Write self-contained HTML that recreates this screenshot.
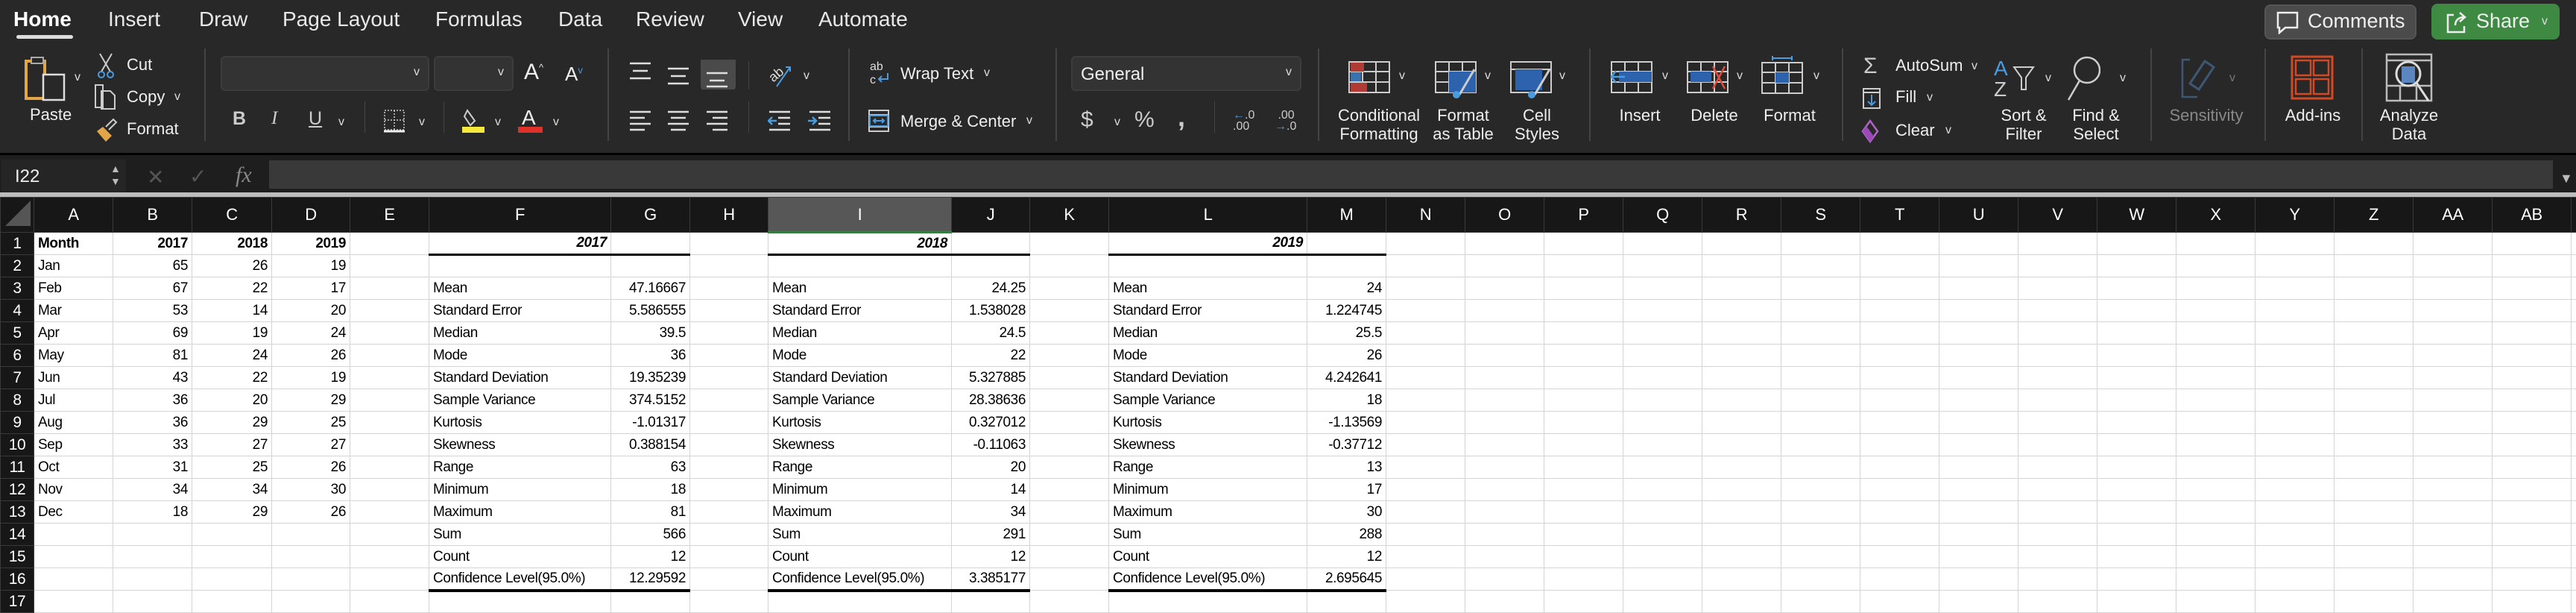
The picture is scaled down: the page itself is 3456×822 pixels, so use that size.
<!DOCTYPE html>
<html><head><meta charset="utf-8">
<style>
*{margin:0;padding:0;box-sizing:border-box}
body{width:3456px;height:819px;background:#fff;overflow:hidden;font-family:"Liberation Sans",sans-serif;position:relative}
#top{position:absolute;left:0;top:0;width:3456px;height:205px;background:#282828;color:#f2f2f2}
.tab{position:absolute;top:10px;font-size:28px;color:#e8e8e8}
.t{position:absolute;font-size:22px;color:#eee;white-space:nowrap}
.c{text-align:center;line-height:25px}
.sep{position:absolute;top:65px;width:2px;height:124px;background:#444}
.dd{position:absolute;background:#333;border:2px solid #3c3c3c;border-radius:6px}
.chev{position:absolute;font-size:16px;color:#ddd}
svg{position:absolute}
#fb{position:absolute;left:0;top:205px;width:3456px;height:59px;background:#1e1e1e;border-top:3px solid #000}
#grid{position:absolute;left:0;top:258px;width:3456px;height:6px;background:#bdbdbd}
table{position:absolute;left:0;top:264px;width:3456px;border-collapse:collapse;table-layout:fixed;font-size:19px;letter-spacing:-0.4px}
th{background:#171717;color:#fff;font-weight:normal;border:1px solid #3a3a3a;font-size:22px}
thead th{height:43px}
tbody th{text-align:center;font-size:21px}
td{height:30px;border:1px solid #d4d4d4;padding:0 5px;white-space:nowrap;overflow:hidden;color:#000}
.r{text-align:right}.b{font-weight:bold}.bi{font-weight:bold;font-style:italic;text-align:right}
.u{border-bottom:3px solid #000}.uu{border-bottom:4px solid #000}
</style></head><body>
<div id="top">
<div class="tab" style="left:18px;font-weight:bold;color:#fff">Home</div>
<div style="position:absolute;left:22px;top:47px;width:76px;height:5px;border-radius:3px;background:#ddd"></div>
<div class="tab" style="left:145px">Insert</div>
<div class="tab" style="left:267px">Draw</div>
<div class="tab" style="left:379px">Page Layout</div>
<div class="tab" style="left:584px">Formulas</div>
<div class="tab" style="left:749px">Data</div>
<div class="tab" style="left:853px">Review</div>
<div class="tab" style="left:990px">View</div>
<div class="tab" style="left:1098px">Automate</div>

<div style="position:absolute;left:3038px;top:6px;width:204px;height:47px;background:#4b4b4b;border-radius:8px;border:2px solid #555"></div>
<svg style="left:3052px;top:14px" width="34" height="32" viewBox="0 0 34 32"><path d="M4 3h26v20H14l-8 7v-7H4z" fill="none" stroke="#eee" stroke-width="2.5"/></svg>
<div class="t" style="left:3096px;top:13px;font-size:27px">Comments</div>
<div style="position:absolute;left:3262px;top:5px;width:172px;height:48px;background:#3e8a43;border-radius:8px"></div>
<svg style="left:3280px;top:14px" width="32" height="32" viewBox="0 0 32 32"><path d="M12 6H4v23h22v-8M14 20c0-8 6-11 12-11M20 3l7 6-7 6" fill="none" stroke="#eee" stroke-width="2.5"/></svg>
<div class="t" style="left:3322px;top:13px;font-size:27px">Share</div>
<div class="chev" style="left:3410px;top:20px">v</div>

<svg style="left:32px;top:74px" width="62" height="62" viewBox="0 0 62 62"><path d="M3 8h25v50H3z" fill="none" stroke="#e2a548" stroke-width="4"/><path d="M10 3h16v8H10z" fill="#282828" stroke="#aaa" stroke-width="2"/><rect x="26" y="26" width="28" height="34" fill="#282828" stroke="#ddd" stroke-width="2.5"/></svg>
<div class="chev" style="left:100px;top:95px">v</div>
<div class="t" style="left:40px;top:141px">Paste</div>
<svg style="left:130px;top:70px" width="24" height="36" viewBox="0 0 24 36"><path d="M4 2l14 24M20 2L6 26" stroke="#ccc" stroke-width="2" fill="none"/><circle cx="6" cy="30" r="4" fill="none" stroke="#4a9ce0" stroke-width="2"/><circle cx="18" cy="30" r="4" fill="none" stroke="#4a9ce0" stroke-width="2"/></svg>
<div class="t" style="left:170px;top:74px">Cut</div>
<svg style="left:126px;top:112px" width="32" height="36" viewBox="0 0 32 36"><path d="M2 2h10v30H2zM10 10h12l6 6v18H10z" fill="#282828" stroke="#ccc" stroke-width="2"/></svg>
<div class="t" style="left:170px;top:117px">Copy</div><div class="chev" style="left:234px;top:121px">v</div>
<svg style="left:126px;top:158px" width="32" height="34" viewBox="0 0 32 34"><path d="M4 18l12 14 8-8-12-12z" fill="#e2a548"/><path d="M16 12l10-10 4 4-10 10" fill="none" stroke="#ccc" stroke-width="2"/></svg>
<div class="t" style="left:170px;top:160px">Format</div>
<div class="sep" style="left:274px"></div>

<div class="dd" style="left:296px;top:75px;width:280px;height:47px"></div><div class="chev" style="left:555px;top:88px">v</div>
<div class="dd" style="left:582px;top:75px;width:107px;height:47px"></div><div class="chev" style="left:668px;top:88px">v</div>
<div class="t" style="left:703px;top:80px;font-size:30px">A<sup style="font-size:13px">^</sup></div>
<div class="t" style="left:758px;top:84px;font-size:26px">A<sup style="font-size:13px;color:#4a9ce0">v</sup></div>
<div class="t" style="left:312px;top:145px;font-weight:bold;font-size:25px;color:#ccc">B</div>
<div class="t" style="left:364px;top:145px;font-style:italic;font-size:25px;color:#ccc;font-family:'Liberation Serif',serif">I</div>
<div class="t" style="left:414px;top:145px;font-size:25px;color:#ccc;text-decoration:underline">U</div>
<div class="chev" style="left:454px;top:155px">v</div>
<div style="position:absolute;left:489px;top:136px;width:1px;height:42px;background:#444"></div>
<svg style="left:514px;top:146px" width="30" height="32" viewBox="0 0 30 32"><path d="M2 2h26v26H2zM15 2v26M2 15h26" fill="none" stroke="#ccc" stroke-width="1.5" stroke-dasharray="2 2"/><path d="M1 30h28" stroke="#eee" stroke-width="3"/></svg>
<div class="chev" style="left:562px;top:155px">v</div>
<div style="position:absolute;left:595px;top:136px;width:1px;height:42px;background:#444"></div>
<svg style="left:619px;top:144px" width="32" height="36" viewBox="0 0 32 36"><path d="M8 4l10 14-6 6L4 12z" fill="none" stroke="#ccc" stroke-width="2"/><rect x="1" y="26" width="30" height="8" fill="#f5ea3c"/></svg>
<div class="chev" style="left:664px;top:155px">v</div>
<div class="t" style="left:700px;top:142px;font-size:28px">A</div>
<div style="position:absolute;left:695px;top:170px;width:33px;height:8px;background:#e03128"></div>
<div class="chev" style="left:742px;top:155px">v</div>
<div class="sep" style="left:815px"></div>

<svg style="left:842px;top:80px" width="150" height="40" viewBox="0 0 150 40"><g stroke="#ddd" stroke-width="2.5"><path d="M3 5h28M7 15h20M3 25h28M54 12h28M58 22h20M54 32h28"/></g><rect x="98" y="-5" width="47" height="47" rx="6" fill="#4a4a4a"/><g stroke="#ddd" stroke-width="2.5"><path d="M106 18h28M110 28h20M106 36h28"/></g></svg>
<div style="position:absolute;left:1004px;top:82px;width:1px;height:38px;background:#444"></div>
<svg style="left:1030px;top:82px" width="36" height="36" viewBox="0 0 36 36"><text x="2" y="22" font-size="18" fill="#ddd" transform="rotate(-40 14 18)" font-family="Liberation Sans">ab</text><path d="M12 34L30 8M24 8h6v6" stroke="#4a9ce0" stroke-width="2" fill="none"/></svg>
<div class="chev" style="left:1078px;top:93px">v</div>
<svg style="left:842px;top:148px" width="150" height="28" viewBox="0 0 150 28"><g stroke="#ddd" stroke-width="2.5"><path d="M3 2h28M3 10h20M3 18h28M3 26h20M54 2h28M58 10h20M54 18h28M58 26h20M106 2h28M114 10h20M106 18h28M114 26h20"/></g></svg>
<div style="position:absolute;left:1004px;top:136px;width:1px;height:42px;background:#444"></div>
<svg style="left:1030px;top:148px" width="90" height="28" viewBox="0 0 90 28"><g stroke="#ddd" stroke-width="2.5"><path d="M2 2h28M14 10h16M14 18h16M2 26h28M56 2h28M68 10h16M68 18h16M56 26h28"/></g><path d="M12 14H2M6 9l-5 5 5 5M54 14h10M60 9l5 5-5 5" stroke="#4a9ce0" stroke-width="2.5" fill="none"/></svg>
<div class="sep" style="left:1138px"></div>

<svg style="left:1165px;top:80px" width="32" height="36" viewBox="0 0 32 36"><text x="2" y="14" font-size="16" fill="#ddd" font-family="Liberation Sans">ab</text><text x="2" y="32" font-size="16" fill="#ddd" font-family="Liberation Sans">c</text><path d="M26 18v8H14M18 22l-4 4 4 4" stroke="#4a9ce0" stroke-width="2" fill="none"/></svg>
<div class="t" style="left:1208px;top:86px">Wrap Text</div><div class="chev" style="left:1320px;top:89px">v</div>
<svg style="left:1164px;top:146px" width="30" height="32" viewBox="0 0 30 32"><path d="M2 2h26v28H2zM2 8h26M2 24h26" fill="none" stroke="#ccc" stroke-width="2"/><path d="M3 9h24v14H3z" fill="none" stroke="#4a9ce0" stroke-width="2"/><path d="M8 16h14M11 13l-3 3 3 3M19 13l3 3-3 3" stroke="#4a9ce0" stroke-width="2" fill="none"/></svg>
<div class="t" style="left:1208px;top:150px">Merge &amp; Center</div><div class="chev" style="left:1377px;top:153px">v</div>
<div class="sep" style="left:1416px"></div>

<div class="dd" style="left:1437px;top:75px;width:309px;height:47px"></div>
<div class="t" style="left:1450px;top:86px;font-size:24px">General</div><div class="chev" style="left:1725px;top:88px">v</div>
<div class="t" style="left:1450px;top:144px;font-size:30px;color:#ccc">$</div><div class="chev" style="left:1495px;top:155px">v</div>
<div class="t" style="left:1522px;top:144px;font-size:30px;color:#ccc">%</div>
<div class="t" style="left:1580px;top:136px;font-size:36px;color:#ccc;font-weight:bold">,</div>
<div style="position:absolute;left:1629px;top:136px;width:1px;height:42px;background:#444"></div>
<div class="t" style="left:1654px;top:147px;font-size:16px;line-height:15px;color:#ccc"><span style="color:#4a9ce0">&larr;</span>.0<br>.00</div>
<div class="t" style="left:1710px;top:147px;font-size:16px;line-height:15px;color:#ccc">&nbsp;.00<br><span style="color:#4a9ce0">&rarr;</span>.0</div>
<div class="sep" style="left:1768px"></div>

<svg style="left:1808px;top:81px" width="60" height="45" viewBox="0 0 60 45"><path d="M2 2h54v41H2zM20 2v41M38 2v41M2 15h54M2 29h54" fill="none" stroke="#ccc" stroke-width="2"/><rect x="4" y="3" width="18" height="12" fill="#b03a35"/><rect x="4" y="16" width="14" height="12" fill="#3a72b0"/><rect x="4" y="30" width="22" height="12" fill="#b03a35"/></svg>
<div class="chev" style="left:1877px;top:93px">v</div>
<svg style="left:1924px;top:81px" width="60" height="52" viewBox="0 0 60 52"><path d="M2 2h54v41H2zM20 2v41M38 2v41M2 15h54M2 29h54" fill="none" stroke="#ccc" stroke-width="2"/><rect x="20" y="15" width="36" height="28" fill="#2d63ad"/><path d="M54 12L34 46" stroke="#ccc" stroke-width="3"/><circle cx="30" cy="46" r="5" fill="#4a9ce0"/></svg>
<div class="chev" style="left:1992px;top:93px">v</div>
<svg style="left:2025px;top:81px" width="60" height="52" viewBox="0 0 60 52"><path d="M2 2h54v41H2zM2 12h54" fill="none" stroke="#ccc" stroke-width="2"/><rect x="8" y="12" width="36" height="28" fill="#2d63ad"/><path d="M54 12L34 46" stroke="#ccc" stroke-width="3"/><circle cx="30" cy="46" r="5" fill="#4a9ce0"/></svg>
<div class="chev" style="left:2092px;top:93px">v</div>
<div class="t c" style="left:1790px;top:142px;width:120px">Conditional<br>Formatting</div>
<div class="t c" style="left:1913px;top:142px;width:100px">Format<br>as Table</div>
<div class="t c" style="left:2012px;top:142px;width:100px">Cell<br>Styles</div>
<div class="sep" style="left:2132px"></div>

<svg style="left:2160px;top:81px" width="62" height="45" viewBox="0 0 62 45"><path d="M2 2h54v41H2zM20 2v41M38 2v41M2 15h54M2 29h54" fill="none" stroke="#ccc" stroke-width="2"/><rect x="12" y="15" width="44" height="14" fill="#2d63ad"/><path d="M20 22H2M8 14l-6 8 6 8" stroke="#4a9ce0" stroke-width="2.5" fill="none"/></svg>
<div class="chev" style="left:2230px;top:93px">v</div>
<svg style="left:2262px;top:81px" width="62" height="45" viewBox="0 0 62 45"><path d="M2 2h54v41H2zM20 2v41M38 2v41M2 15h54M2 29h54" fill="none" stroke="#ccc" stroke-width="2"/><rect x="6" y="15" width="28" height="14" fill="#2d63ad"/><path d="M36 8l16 30M52 8L36 38" stroke="#e04a3a" stroke-width="2.5"/></svg>
<div class="chev" style="left:2330px;top:93px">v</div>
<svg style="left:2362px;top:72px" width="58" height="54" viewBox="0 0 58 54"><path d="M16 3v6M16 6h26M42 3v6" stroke="#4a9ce0" stroke-width="2"/><path d="M2 12h54v41H2zM20 12v41M38 12v41M2 25h54M2 39h54" fill="none" stroke="#ccc" stroke-width="2"/><rect x="20" y="25" width="18" height="14" fill="#2d63ad"/></svg>
<div class="chev" style="left:2433px;top:93px">v</div>
<div class="t c" style="left:2150px;top:142px;width:100px">Insert</div>
<div class="t c" style="left:2250px;top:142px;width:100px">Delete</div>
<div class="t c" style="left:2351px;top:142px;width:100px">Format</div>
<div class="sep" style="left:2471px"></div>

<div class="t" style="left:2500px;top:72px;font-size:30px;color:#ccc">&Sigma;</div>
<div class="t" style="left:2543px;top:75px">AutoSum</div><div class="chev" style="left:2645px;top:80px">v</div>
<svg style="left:2498px;top:117px" width="26" height="30" viewBox="0 0 26 30"><path d="M2 2h22v26H2zM2 7h22" fill="none" stroke="#ccc" stroke-width="2"/><path d="M13 10v14M8 19l5 5 5-5" stroke="#4a9ce0" stroke-width="2" fill="none"/></svg>
<div class="t" style="left:2543px;top:117px">Fill</div><div class="chev" style="left:2585px;top:122px">v</div>
<svg style="left:2496px;top:160px" width="26" height="32" viewBox="0 0 26 32"><path d="M13 2l10 14-10 14L3 16z" fill="none" stroke="#b063c8" stroke-width="2.5"/><path d="M3 16l10 14 5-7-10-14z" fill="#9a4ab5"/></svg>
<div class="t" style="left:2543px;top:162px">Clear</div><div class="chev" style="left:2610px;top:166px">v</div>
<div class="t" style="left:2675px;top:76px;font-size:28px;color:#4a9ce0">A</div>
<div class="t" style="left:2675px;top:104px;font-size:28px;color:#ccc">Z</div>
<svg style="left:2700px;top:88px" width="30" height="34" viewBox="0 0 30 34"><path d="M2 2h26L18 16v16h-6V16z" fill="none" stroke="#ccc" stroke-width="2"/></svg>
<div class="chev" style="left:2744px;top:96px">v</div>
<svg style="left:2772px;top:74px" width="46" height="62" viewBox="0 0 46 62"><circle cx="28" cy="20" r="17" fill="none" stroke="#ccc" stroke-width="2.5"/><path d="M18 34L3 60" stroke="#ccc" stroke-width="2.5"/></svg>
<div class="chev" style="left:2844px;top:96px">v</div>
<div class="t c" style="left:2665px;top:142px;width:100px">Sort &amp;<br>Filter</div>
<div class="t c" style="left:2762px;top:142px;width:100px">Find &amp;<br>Select</div>
<div class="sep" style="left:2885px"></div>
<svg style="left:2926px;top:72px" width="56" height="60" viewBox="0 0 56 60"><path d="M22 58H2V8h10" fill="none" stroke="#3d5875" stroke-width="2.5"/><path d="M12 40l20-30 12 8-20 30z" fill="none" stroke="#3d5875" stroke-width="3"/></svg>
<div class="chev" style="left:2991px;top:96px;color:#777">v</div>
<div class="t c" style="left:2905px;top:142px;width:110px;color:#888">Sensitivity</div>
<div class="sep" style="left:3038px"></div>
<svg style="left:3073px;top:74px" width="58" height="60" viewBox="0 0 58 60"><path d="M2 2h54v56H2z" fill="none" stroke="#d04a26" stroke-width="3"/><path d="M7 7h20v20H7zM31 7h20v20H31zM7 32h20v20H7zM31 32h20v20H31z" fill="none" stroke="#d04a26" stroke-width="2.5"/></svg>
<div class="t c" style="left:3053px;top:142px;width:100px">Add-ins</div>
<div class="sep" style="left:3168px"></div>
<svg style="left:3200px;top:71px" width="64" height="66" viewBox="0 0 64 66"><path d="M2 2h60v62H2zM2 10h60M2 44h60M20 44v20M42 44v20" fill="none" stroke="#bbb" stroke-width="2.5"/><rect x="22" y="18" width="18" height="22" fill="#5b86bf"/><circle cx="31" cy="28" r="16" fill="none" stroke="#ddd" stroke-width="3"/><path d="M42 40l16 24" stroke="#ddd" stroke-width="3"/></svg>
<div class="t c" style="left:3182px;top:142px;width:100px">Analyze<br>Data</div>
</div>

<div id="fb">
 <div style="position:absolute;left:2px;top:6px;width:167px;height:48px;background:#252525"></div>
 <div class="t" style="left:20px;top:15px;font-size:24px;color:#eee">I22</div>
 <div style="position:absolute;left:148px;top:10px;color:#bbb;font-size:14px;line-height:17px">&#9650;<br>&#9660;</div>
 <div class="t" style="left:197px;top:13px;font-size:28px;color:#555">&#10005;</div>
 <div class="t" style="left:254px;top:12px;font-size:28px;color:#555">&#10003;</div>
 <div class="t" style="left:316px;top:10px;font-size:30px;color:#888;font-style:italic;font-family:'Liberation Serif',serif">fx</div>
 <div style="position:absolute;left:361px;top:7px;width:3064px;height:38px;background:#393939"></div>
 <div style="position:absolute;left:3434px;top:21px;color:#bbb;font-size:18px">&#9660;</div>
</div>
<div id="grid"></div>

<table>
<colgroup><col style="width:45px"><col style="width:106px"><col style="width:106px"><col style="width:107px"><col style="width:105px"><col style="width:106px"><col style="width:244px"><col style="width:106px"><col style="width:105px"><col style="width:246px"><col style="width:105px"><col style="width:106px"><col style="width:266px"><col style="width:106px"><col style="width:106px"><col style="width:106px"><col style="width:106px"><col style="width:106px"><col style="width:106px"><col style="width:106px"><col style="width:106px"><col style="width:106px"><col style="width:106px"><col style="width:106px"><col style="width:106px"><col style="width:106px"><col style="width:106px"><col style="width:106px"><col style="width:106px"><col style="width:7px"></colgroup>
<thead><tr><th style="background:#171717"><svg style="position:static" width="40" height="40" viewBox="0 0 40 40"><path d="M38 4V38H4z" fill="#555"/></svg></th><th>A</th><th>B</th><th>C</th><th>D</th><th>E</th><th>F</th><th>G</th><th>H</th><th style="background:#575757;border-bottom:3px solid #3a7d44">I</th><th>J</th><th>K</th><th>L</th><th>M</th><th>N</th><th>O</th><th>P</th><th>Q</th><th>R</th><th>S</th><th>T</th><th>U</th><th>V</th><th>W</th><th>X</th><th>Y</th><th>Z</th><th>AA</th><th>AB</th><th></th></tr></thead>
<tbody>
<tr><th>1</th><td class="b">Month</td><td class="r b">2017</td><td class="r b">2018</td><td class="r b">2019</td><td></td><td class="bi u">2017</td><td class="u"></td><td></td><td class="bi u">2018</td><td class="u"></td><td></td><td class="bi u">2019</td><td class="u"></td><td></td><td></td><td></td><td></td><td></td><td></td><td></td><td></td><td></td><td></td><td></td><td></td><td></td><td></td><td></td><td></td></tr>
<tr><th>2</th><td>Jan</td><td class="r">65</td><td class="r">26</td><td class="r">19</td><td></td><td></td><td></td><td></td><td></td><td></td><td></td><td></td><td></td><td></td><td></td><td></td><td></td><td></td><td></td><td></td><td></td><td></td><td></td><td></td><td></td><td></td><td></td><td></td><td></td></tr>
<tr><th>3</th><td>Feb</td><td class="r">67</td><td class="r">22</td><td class="r">17</td><td></td><td>Mean</td><td class="r">47.16667</td><td></td><td>Mean</td><td class="r">24.25</td><td></td><td>Mean</td><td class="r">24</td><td></td><td></td><td></td><td></td><td></td><td></td><td></td><td></td><td></td><td></td><td></td><td></td><td></td><td></td><td></td><td></td></tr>
<tr><th>4</th><td>Mar</td><td class="r">53</td><td class="r">14</td><td class="r">20</td><td></td><td>Standard Error</td><td class="r">5.586555</td><td></td><td>Standard Error</td><td class="r">1.538028</td><td></td><td>Standard Error</td><td class="r">1.224745</td><td></td><td></td><td></td><td></td><td></td><td></td><td></td><td></td><td></td><td></td><td></td><td></td><td></td><td></td><td></td><td></td></tr>
<tr><th>5</th><td>Apr</td><td class="r">69</td><td class="r">19</td><td class="r">24</td><td></td><td>Median</td><td class="r">39.5</td><td></td><td>Median</td><td class="r">24.5</td><td></td><td>Median</td><td class="r">25.5</td><td></td><td></td><td></td><td></td><td></td><td></td><td></td><td></td><td></td><td></td><td></td><td></td><td></td><td></td><td></td><td></td></tr>
<tr><th>6</th><td>May</td><td class="r">81</td><td class="r">24</td><td class="r">26</td><td></td><td>Mode</td><td class="r">36</td><td></td><td>Mode</td><td class="r">22</td><td></td><td>Mode</td><td class="r">26</td><td></td><td></td><td></td><td></td><td></td><td></td><td></td><td></td><td></td><td></td><td></td><td></td><td></td><td></td><td></td><td></td></tr>
<tr><th>7</th><td>Jun</td><td class="r">43</td><td class="r">22</td><td class="r">19</td><td></td><td>Standard Deviation</td><td class="r">19.35239</td><td></td><td>Standard Deviation</td><td class="r">5.327885</td><td></td><td>Standard Deviation</td><td class="r">4.242641</td><td></td><td></td><td></td><td></td><td></td><td></td><td></td><td></td><td></td><td></td><td></td><td></td><td></td><td></td><td></td><td></td></tr>
<tr><th>8</th><td>Jul</td><td class="r">36</td><td class="r">20</td><td class="r">29</td><td></td><td>Sample Variance</td><td class="r">374.5152</td><td></td><td>Sample Variance</td><td class="r">28.38636</td><td></td><td>Sample Variance</td><td class="r">18</td><td></td><td></td><td></td><td></td><td></td><td></td><td></td><td></td><td></td><td></td><td></td><td></td><td></td><td></td><td></td><td></td></tr>
<tr><th>9</th><td>Aug</td><td class="r">36</td><td class="r">29</td><td class="r">25</td><td></td><td>Kurtosis</td><td class="r">-1.01317</td><td></td><td>Kurtosis</td><td class="r">0.327012</td><td></td><td>Kurtosis</td><td class="r">-1.13569</td><td></td><td></td><td></td><td></td><td></td><td></td><td></td><td></td><td></td><td></td><td></td><td></td><td></td><td></td><td></td><td></td></tr>
<tr><th>10</th><td>Sep</td><td class="r">33</td><td class="r">27</td><td class="r">27</td><td></td><td>Skewness</td><td class="r">0.388154</td><td></td><td>Skewness</td><td class="r">-0.11063</td><td></td><td>Skewness</td><td class="r">-0.37712</td><td></td><td></td><td></td><td></td><td></td><td></td><td></td><td></td><td></td><td></td><td></td><td></td><td></td><td></td><td></td><td></td></tr>
<tr><th>11</th><td>Oct</td><td class="r">31</td><td class="r">25</td><td class="r">26</td><td></td><td>Range</td><td class="r">63</td><td></td><td>Range</td><td class="r">20</td><td></td><td>Range</td><td class="r">13</td><td></td><td></td><td></td><td></td><td></td><td></td><td></td><td></td><td></td><td></td><td></td><td></td><td></td><td></td><td></td><td></td></tr>
<tr><th>12</th><td>Nov</td><td class="r">34</td><td class="r">34</td><td class="r">30</td><td></td><td>Minimum</td><td class="r">18</td><td></td><td>Minimum</td><td class="r">14</td><td></td><td>Minimum</td><td class="r">17</td><td></td><td></td><td></td><td></td><td></td><td></td><td></td><td></td><td></td><td></td><td></td><td></td><td></td><td></td><td></td><td></td></tr>
<tr><th>13</th><td>Dec</td><td class="r">18</td><td class="r">29</td><td class="r">26</td><td></td><td>Maximum</td><td class="r">81</td><td></td><td>Maximum</td><td class="r">34</td><td></td><td>Maximum</td><td class="r">30</td><td></td><td></td><td></td><td></td><td></td><td></td><td></td><td></td><td></td><td></td><td></td><td></td><td></td><td></td><td></td><td></td></tr>
<tr><th>14</th><td></td><td></td><td></td><td></td><td></td><td>Sum</td><td class="r">566</td><td></td><td>Sum</td><td class="r">291</td><td></td><td>Sum</td><td class="r">288</td><td></td><td></td><td></td><td></td><td></td><td></td><td></td><td></td><td></td><td></td><td></td><td></td><td></td><td></td><td></td><td></td></tr>
<tr><th>15</th><td></td><td></td><td></td><td></td><td></td><td>Count</td><td class="r">12</td><td></td><td>Count</td><td class="r">12</td><td></td><td>Count</td><td class="r">12</td><td></td><td></td><td></td><td></td><td></td><td></td><td></td><td></td><td></td><td></td><td></td><td></td><td></td><td></td><td></td><td></td></tr>
<tr><th>16</th><td></td><td></td><td></td><td></td><td></td><td class="uu">Confidence Level(95.0%)</td><td class="r uu">12.29592</td><td></td><td class="uu">Confidence Level(95.0%)</td><td class="r uu">3.385177</td><td></td><td class="uu">Confidence Level(95.0%)</td><td class="r uu">2.695645</td><td></td><td></td><td></td><td></td><td></td><td></td><td></td><td></td><td></td><td></td><td></td><td></td><td></td><td></td><td></td><td></td></tr>
<tr><th>17</th><td></td><td></td><td></td><td></td><td></td><td></td><td></td><td></td><td></td><td></td><td></td><td></td><td></td><td></td><td></td><td></td><td></td><td></td><td></td><td></td><td></td><td></td><td></td><td></td><td></td><td></td><td></td><td></td><td></td></tr>
</tbody></table>
</body></html>
